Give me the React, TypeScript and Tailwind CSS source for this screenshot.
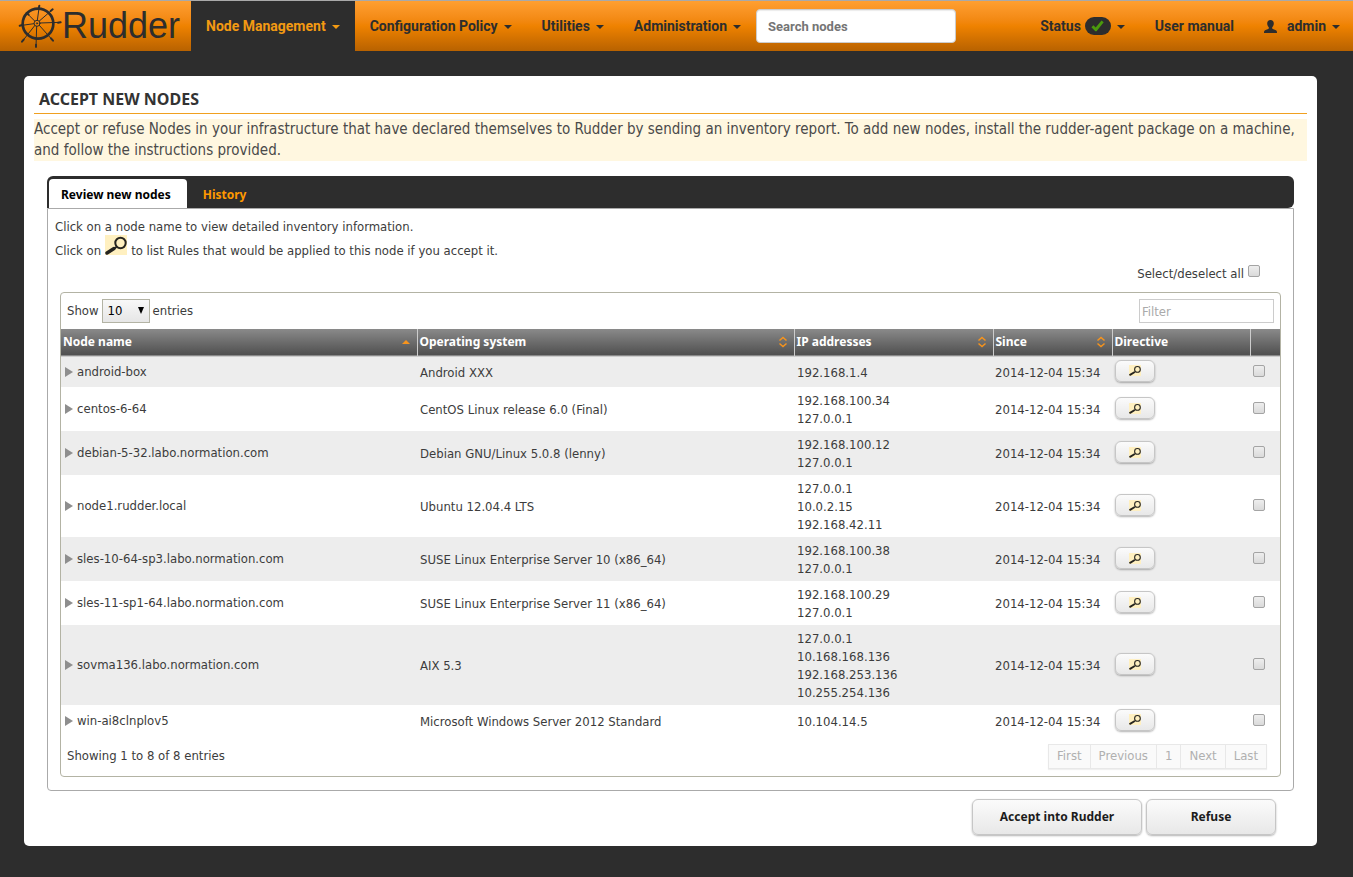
import React from 'react';

type NodeRow = { name: string; os: string; ips: string[] };

const SINCE = '2014-12-04 15:34';

const NODES: NodeRow[] = [
  { name: 'android-box', os: 'Android XXX', ips: ['192.168.1.4'] },
  { name: 'centos-6-64', os: 'CentOS Linux release 6.0 (Final)', ips: ['192.168.100.34', '127.0.0.1'] },
  { name: 'debian-5-32.labo.normation.com', os: 'Debian GNU/Linux 5.0.8 (lenny)', ips: ['192.168.100.12', '127.0.0.1'] },
  { name: 'node1.rudder.local', os: 'Ubuntu 12.04.4 LTS', ips: ['127.0.0.1', '10.0.2.15', '192.168.42.11'] },
  { name: 'sles-10-64-sp3.labo.normation.com', os: 'SUSE Linux Enterprise Server 10 (x86_64)', ips: ['192.168.100.38', '127.0.0.1'] },
  { name: 'sles-11-sp1-64.labo.normation.com', os: 'SUSE Linux Enterprise Server 11 (x86_64)', ips: ['192.168.100.29', '127.0.0.1'] },
  { name: 'sovma136.labo.normation.com', os: 'AIX 5.3', ips: ['127.0.0.1', '10.168.168.136', '192.168.253.136', '10.255.254.136'] },
  { name: 'win-ai8clnplov5', os: 'Microsoft Windows Server 2012 Standard', ips: ['10.104.14.5'] },
];

const checkboxClass =
  'block size-3 appearance-none rounded-xs border border-[#a4a4a4] bg-linear-to-b from-[#eeeeee] to-[#dadada] checked:bg-[#888888]';

const raisedClass =
  'border border-[#c6c6c6] bg-linear-to-b from-[#fbfbfb] to-[#e8e8e8] shadow-[0_1px_2px_rgba(0,0,0,0.3)]';

function Caret() {
  return (
    <svg viewBox="0 0 8 4" className="mt-0.5 ml-1.5 h-1 w-2 shrink-0" fill="currentColor" aria-hidden="true">
      <path d="M0 0h8L4 4z" />
    </svg>
  );
}

function Wheel() {
  return (
    <svg viewBox="0 0 132 132" className="size-11 shrink-0" fill="none" stroke="#2d2d2d" strokeLinecap="round" aria-hidden="true">
      <ellipse cx="60" cy="59" rx="46" ry="45" strokeWidth="8" />
      <circle cx="57" cy="58" r="9" strokeWidth="3" />
      <circle cx="57" cy="58" r="2" strokeWidth="3" />
      <path
        strokeWidth="3"
        d="M58 49 64 6M64 51 102 18M66 57 127 55M64 64 104 109M56 67 54 130M50 65 13 112M48 59 5 65M50 51 27 28"
      />
      <path
        strokeWidth="6"
        d="M63 10 64 5M98 21 104 16M120 56 128 55M99 103 105 110M54 122 54 128M17 107 12 113M13 63 5 65M32 32 26 27"
      />
    </svg>
  );
}

function Magnifier({ className }: { className: string }) {
  return (
    <svg viewBox="0 0 22 20" className={className} fill="none" stroke="#26241f" aria-hidden="true">
      <path d="M0 0h22v20H0z" fill="#fff0c0" stroke="none" />
      <circle cx="15.5" cy="8" r="5.2" strokeWidth="2" />
      <path d="M11.5 12 8.5 14" strokeWidth="2" />
      <path d="M9 13.5 2 18" strokeWidth="3.4" strokeLinecap="round" />
    </svg>
  );
}

function SortIcon({ asc }: { asc?: boolean }) {
  return (
    <svg viewBox="0 0 9 12" className="h-3 w-2.5 shrink-0" fill="none" stroke="#f7941d" strokeWidth="1.5" aria-hidden="true">
      {asc ? <path d="M.5 8h8L4.5 4z" fill="#f7941d" stroke="none" /> : <path d="M1 4.5 4.5 1.5 8 4.5M1 7.5 4.5 10.5 8 7.5" />}
    </svg>
  );
}

function NavLink({ label, active }: { label: string; active?: boolean }) {
  return (
    <a
      href="#"
      className={`flex items-center self-stretch px-[15px] ${active ? 'bg-[#2d2d2d] text-[#f39a12]' : 'text-[#2d2d2d]'}`}
    >
      {label}
      <Caret />
    </a>
  );
}

function NavBar() {
  return (
    <header className="flex h-[51px] items-center border-t border-[#a9a9a9] bg-linear-to-b from-[#ff9f30] via-[#ef8200] to-[#b86200] font-[Roboto,sans-serif] text-sm font-bold whitespace-nowrap text-[#2d2d2d]">
      <a href="#" className="flex w-[191px] shrink-0 items-center pl-[18px]">
        <Wheel />
        <span className="font-['Liberation_Sans',sans-serif] text-4xl leading-none font-normal">Rudder</span>
      </a>
      <nav className="flex self-stretch">
        <NavLink label="Node Management" active />
        <NavLink label="Configuration Policy" />
        <NavLink label="Utilities" />
        <NavLink label="Administration" />
      </nav>
      <input
        type="text"
        aria-label="Search nodes"
        placeholder="Search nodes"
        className="h-[34px] w-[200px] rounded border border-[#cccccc] bg-white px-[11px] text-[13px] font-bold shadow-[inset_0_1px_1px_rgba(0,0,0,0.08)] placeholder:text-[#757575]"
      />
      <div className="ml-auto flex self-stretch">
        <a href="#" className="flex items-center px-[15px]">
          Status
          <span className="ml-1 flex h-[18px] w-[26px] items-center justify-center rounded-[9px] bg-[#2d2d2d]">
            <svg viewBox="0 0 13 12" className="h-3 w-[13px]" fill="#4b9a0c" aria-hidden="true">
              <path d="M10.5.5 12.7 2.3 5.5 11.3 4.3 11.3.4 7.3 2.4 5.3 4.7 7.5z" />
            </svg>
          </span>
          <Caret />
        </a>
        <a href="#" className="flex items-center px-[15px]">
          User manual
        </a>
        <a href="#" className="flex items-center pr-[13px] pl-[15px]">
          <svg viewBox="0 0 13 13" className="mr-2.5 h-[13px] w-[13px]" fill="#2d2d2d" aria-hidden="true">
            <path d="M6.5 0C8.6 0 9.8 1.3 9.8 3.5 9.8 5 9.2 6.4 8.2 7.2V8.6C8.5 9.2 11.5 9.9 12.3 10.5 12.9 11 13 12 13 13H0C0 12 .1 11 .7 10.5 1.5 9.9 4.5 9.2 4.8 8.6V7.2C3.8 6.4 3.2 5 3.2 3.5 3.2 1.3 4.4 0 6.5 0z" />
          </svg>
          admin
          <Caret />
        </a>
      </div>
    </header>
  );
}

function HeadCell({ label, sort }: { label: string; sort?: 'asc' | 'none' }) {
  return (
    <th className="border-r border-[#cccccc] px-0.5 text-left font-bold">
      <div className="flex items-center justify-between pr-1">
        {label}
        {sort && <SortIcon asc={sort === 'asc'} />}
      </div>
    </th>
  );
}

function NodesTable() {
  return (
    <table className="w-full table-fixed border-collapse">
      <colgroup>
        <col />
        <col className="w-[377px]" />
        <col className="w-[199px]" />
        <col className="w-[119px]" />
        <col className="w-[138px]" />
        <col className="w-[30px]" />
      </colgroup>
      <thead>
        <tr className="h-[27px] border-b border-[#cccccc] bg-linear-to-b from-[#8a8a8a] to-[#505050] font-['Noto_Sans',sans-serif] text-xs text-white">
          <HeadCell label="Node name" sort="asc" />
          <HeadCell label="Operating system" sort="none" />
          <HeadCell label="IP addresses" sort="none" />
          <HeadCell label="Since" sort="none" />
          <HeadCell label="Directive" />
          <th aria-label="Selection" />
        </tr>
      </thead>
      <tbody>
        {NODES.map((node) => (
          <tr key={node.name} className="h-[31px] odd:bg-[#ededed]">
            <td className="px-1 py-1">
              <a href="#" className="flex items-center gap-1">
                <svg viewBox="0 0 8 10" className="h-2.5 w-2 shrink-0" fill="#8e8e8e" aria-hidden="true">
                  <path d="M0 0 8 5 0 10z" />
                </svg>
                {node.name}
              </a>
            </td>
            <td className="px-[3px] pt-[5px] pb-[3px]">{node.os}</td>
            <td className="px-[3px] pt-[5px] pb-[3px]">
              {node.ips.map((ip) => (
                <div key={ip}>{ip}</div>
              ))}
            </td>
            <td className="px-0.5 pt-[5px] pb-[3px]">{SINCE}</td>
            <td className="px-[3px] pt-[3px] pb-[5px]">
              <button type="button" aria-label={`Rules applied to ${node.name}`} className={`flex h-[22px] w-10 items-center justify-center rounded-md ${raisedClass}`}>
                <Magnifier className="h-[11px] w-3" />
              </button>
            </td>
            <td className="px-[3px] pb-0.5">
              <input type="checkbox" aria-label={`Select ${node.name}`} className={checkboxClass} />
            </td>
          </tr>
        ))}
      </tbody>
    </table>
  );
}

export default function App() {
  return (
    <div className="min-h-screen bg-[#2d2d2d] pb-[31px] font-['DejaVu_Sans_Condensed','DejaVu_Sans',sans-serif] text-[13px] leading-[18px] text-[#3c3c3c]">
      <NavBar />
      <main className="mt-[25px] mr-9 ml-6 rounded-[5px] bg-white px-2.5 pb-[11px]">
        <h1 className="border-b border-[#f0a020] px-[5px] pt-[11px] pb-[2px] font-['Noto_Sans',sans-serif] text-base font-bold text-[#333333]">
          ACCEPT NEW NODES
        </h1>
        <p className="mt-[5px] bg-[#fff7e0] text-[15px] leading-[21px] text-[#4a4a4a]">
          Accept or refuse Nodes in your infrastructure that have declared themselves to Rudder by sending an inventory
          report. To add new nodes, install the rudder-agent package on a machine, and follow the instructions provided.
        </p>

        <div className="mx-[13px] mt-[15px]">
          <div className="flex h-8 items-end rounded-[6px] rounded-bl-none bg-[#2d2d2d] pl-0.5 font-['Noto_Sans',sans-serif] text-xs font-bold">
            <a href="#" className="flex h-[29px] items-center rounded-t bg-white pt-0.5 pr-4 pl-3 text-black">
              Review new nodes
            </a>
            <a href="#" className="flex h-[29px] items-center px-4 pt-0.5 text-[#f90]">
              History
            </a>
          </div>

          <section className="rounded-b border border-[#aaaaaa] px-3 pb-[13px]">
            <div className="-ml-[5px] pt-2">
              <p className="leading-5">Click on a node name to view detailed inventory information.</p>
              <p className="flex h-7 items-center">
                Click on
                <Magnifier className="mx-1 mb-3 h-5 w-[22px]" />
                to list Rules that would be applied to this node if you accept it.
              </p>
            </div>
            <label className="flex h-[18px] items-center justify-end gap-1 pr-[21px]">
              Select/deselect all
              <input type="checkbox" className={`mb-1.5 ${checkboxClass}`} />
            </label>

            <div className="mt-[9px] rounded border border-[#b3b3a4]">
              <div className="flex h-9 items-center justify-between px-1.5">
                <label className="flex items-center gap-[3px]">
                  Show
                  <span className="relative">
                    <select className="h-6 w-12 appearance-none border border-[#b3b3a4] bg-linear-to-b from-[#f8f8f8] to-[#e6e6e6] pl-[5px] text-black">
                      <option>10</option>
                      <option>25</option>
                      <option>50</option>
                    </select>
                    <svg viewBox="0 0 6 7" className="pointer-events-none absolute top-2 right-1.5 h-[7px] w-1.5" aria-hidden="true">
                      <path d="M0 0h6L3 7z" />
                    </svg>
                  </span>
                  entries
                </label>
                <input
                  type="text"
                  aria-label="Filter"
                  placeholder="Filter"
                  className="h-6 w-[135px] border border-[#cccccc] bg-white px-0.5 placeholder:text-[#aaaaaa]"
                />
              </div>
              <NodesTable />
              <div className="flex h-10 items-center justify-between pr-[13px] pl-1.5">
                <p>Showing 1 to 8 of 8 entries</p>
                <div className="flex divide-x divide-[#e8e8e8] border border-[#e8e8e8] bg-[#fafafa] text-[#b0b0b0] shadow-[0_1px_1px_rgba(0,0,0,0.06)]">
                  {['First', 'Previous', '1', 'Next', 'Last'].map((page) => (
                    <button key={page} type="button" className="h-[23px] px-2">
                      {page}
                    </button>
                  ))}
                </div>
              </div>
            </div>
          </section>

          <div className="mt-2 flex justify-end gap-1 pr-[18px] font-['Noto_Sans',sans-serif] text-xs font-bold text-[#1c1c1c]">
            <button type="button" className={`h-9 w-[170px] rounded-md ${raisedClass}`}>
              Accept into Rudder
            </button>
            <button type="button" className={`h-9 w-[130px] rounded-md ${raisedClass}`}>
              Refuse
            </button>
          </div>
        </div>
      </main>
    </div>
  );
}
